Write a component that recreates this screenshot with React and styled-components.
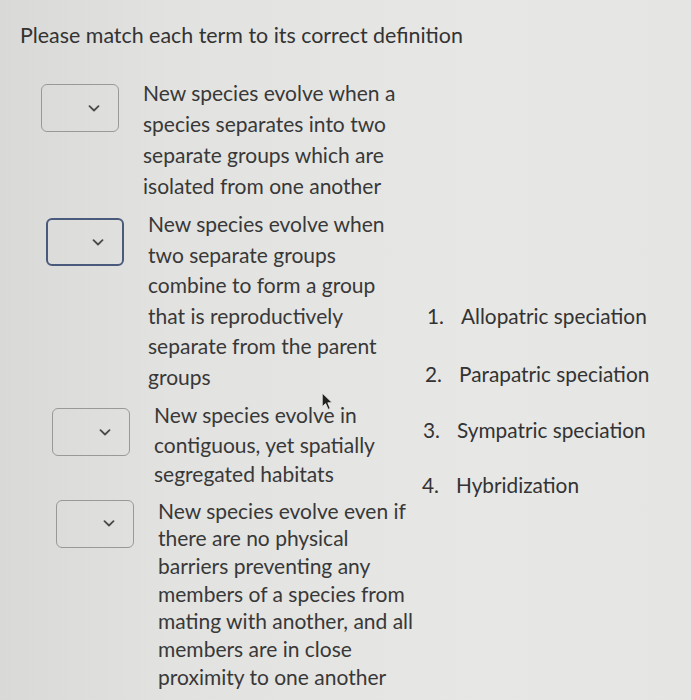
import React from 'react'
import styled, { createGlobalStyle } from 'styled-components'

const GlobalStyle = createGlobalStyle`
  html, body {
    margin: 0;
    padding: 0;
  }
  body {
    background: linear-gradient(90deg, #d9d9d7 0%, #e2e2e0 25%, #e7e7e5 70%, #e5e5e3 100%);
    font-family: Lato, "Open Sans", sans-serif;
    color: #363636;
  }
`

const Page = styled.div`
  position: relative;
  width: 691px;
  height: 700px;
  padding: 23px 0 0 20px;
  box-sizing: border-box;
  overflow: hidden;
`

const Title = styled.h1`
  margin: 0;
  font-size: 21.4px;
  font-weight: 400;
  line-height: 24px;
  color: #333;
`

const Question = styled.div`
  display: flex;
  margin-top: 30px;
`

const Terms = styled.div`
  display: flex;
  flex-direction: column;
  gap: 8px;
  width: 402px;
`

const Row = styled.div`
  display: flex;
  align-items: flex-start;
  gap: 24px;
  padding-left: ${p => 21 + p.$indent}px;
`

const Select = styled.div`
  flex: none;
  display: flex;
  align-items: center;
  justify-content: flex-end;
  box-sizing: border-box;
  width: 78px;
  height: 48px;
  margin-top: ${p => p.$top}px;
  padding-right: 18px;
  border: ${p => (p.$focused ? '2px solid #4a5a7c' : '1px solid #999')};
  border-radius: 6px;
  background: transparent;
`

const Definition = styled.div`
  width: ${p => p.$width}px;
  font-size: 21px;
  line-height: ${p => p.$lh}px;
  color: #383838;
`

const Answers = styled.ol`
  list-style: none;
  margin: 226px 0 0;
  padding: 0;
  display: flex;
  flex-direction: column;
  gap: 33px;
`

const Answer = styled.li`
  display: flex;
  padding-left: ${p => p.$indent}px;
  font-size: 20.8px;
  line-height: ${p => p.$lh}px;
  color: #333;
`

const Num = styled.span`
  width: 34px;
  flex: none;
`

const Cursor = styled.svg`
  position: absolute;
  left: 321px;
  top: 392px;
`

const Chevron = () => (
  <svg width="12" height="7" viewBox="0 0 12 7">
    <path d="M1.5 1.2 L6 5.5 L10.5 1.2" fill="none" stroke="#4a4a4a" strokeWidth="1.8" strokeLinecap="round" strokeLinejoin="round" />
  </svg>
)

const rows = [
  { indent: 0, top: 7, width: 262, lh: 31, text: 'New species evolve when a species separates into two separate groups which are isolated from one another' },
  { indent: 5, top: 9, focused: true, width: 238, lh: 30.5, text: 'New species evolve when two separate groups combine to form a group that is reproductively separate from the parent groups' },
  { indent: 11, top: 8, width: 250, lh: 29.5, text: 'New species evolve in contiguous, yet spatially segregated habitats' },
  { indent: 15, top: 3, width: 261, lh: 27.7, text: 'New species evolve even if there are no physical barriers preventing any members of a species from mating with another, and all members are in close proximity to one another' },
]

const answers = [
  { indent: 5, lh: 25, label: 'Allopatric speciation' },
  { indent: 3, lh: 25, label: 'Parapatric speciation' },
  { indent: 1, lh: 22, label: 'Sympatric speciation' },
  { indent: 0, lh: 22, label: 'Hybridization' },
]

export default function App() {
  return (
    <>
      <GlobalStyle />
      <Page>
        <Title>Please match each term to its correct definition</Title>
        <Question>
          <Terms>
            {rows.map((r, i) => (
              <Row key={i} $indent={r.indent}>
                <Select $top={r.top} $focused={r.focused}>
                  <Chevron />
                </Select>
                <Definition $width={r.width} $lh={r.lh}>{r.text}</Definition>
              </Row>
            ))}
          </Terms>
          <Answers>
            {answers.map((a, i) => (
              <Answer key={i} $indent={a.indent} $lh={a.lh}>
                <Num>{i + 1}.</Num>
                <span>{a.label}</span>
              </Answer>
            ))}
          </Answers>
        </Question>
        <Cursor width="13" height="19" viewBox="0 0 12 18">
          <path d="M1 1 L1 14 L4.2 11 L6.6 16.5 L8.6 15.6 L6.3 10.2 L10.5 10.2 Z" fill="#222" stroke="#eee" strokeWidth="0.8" />
        </Cursor>
      </Page>
    </>
  )
}
